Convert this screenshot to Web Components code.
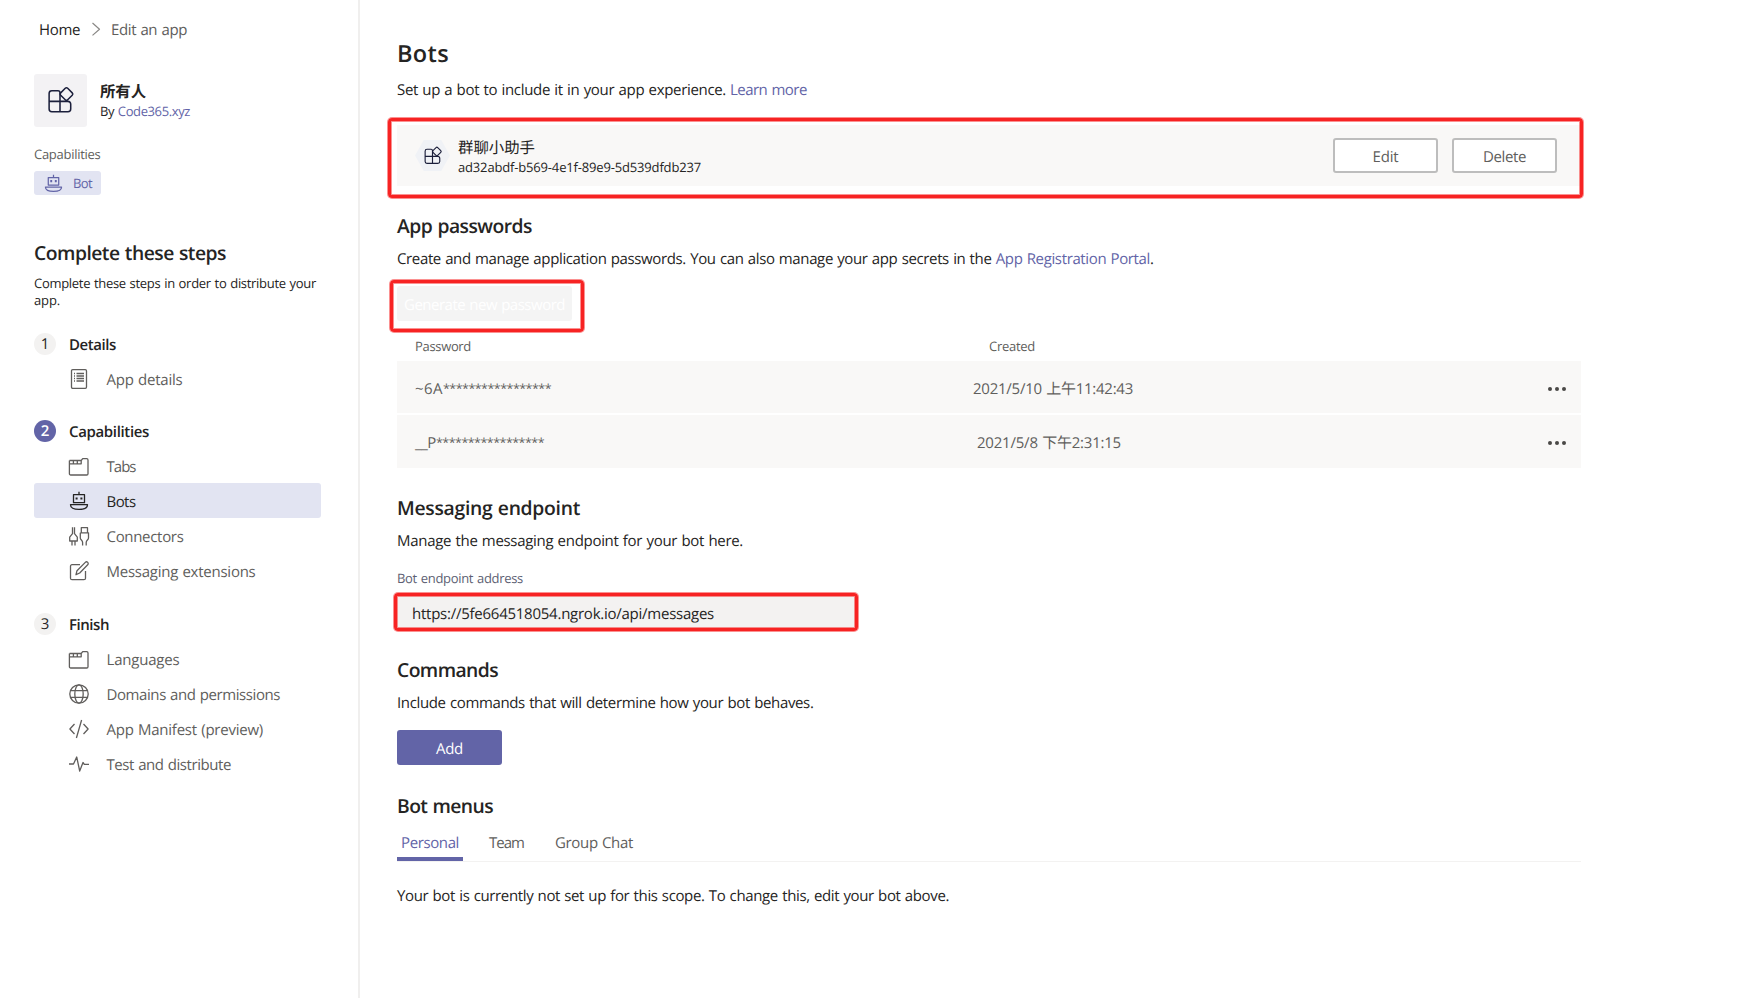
<!DOCTYPE html>
<html lang="en">
<head>
<meta charset="utf-8">
<title>Edit an app</title>
<style>
html,body{margin:0;height:100%;background:#fff}
body{font-family:"Open Sans","Noto Sans CJK SC",sans-serif;color:#252423;text-rendering:geometricPrecision;overflow:hidden}
</style>
</head>
<body>
<bot-app></bot-app>
<script>
const make=(name,render)=>customElements.define(name,class extends HTMLElement{
  connectedCallback(){
    if(this.shadowRoot)return;
    const t=document.createElement('template');
    t.innerHTML=render(this);
    this.attachShadow({mode:'open'}).appendChild(document.importNode(t.content,true));
  }
});
const at=(e,n,d='')=>e.getAttribute(n)??d;

const icons={
  chevron:'<path d="M6.500 4l7 6.200-7 6.200"/>',
  apps:'<path d="M5.200 4.600h3.600a1.200 1.200 0 0 1 1.200 1.200V16.900H5.200A1.600 1.600 0 0 1 3.600 15.300V6.200A1.600 1.600 0 0 1 5.200 4.600zM3.600 10.800h11.100a1.600 1.600 0 0 1 1.600 1.600v2.900a1.600 1.600 0 0 1-1.600 1.600H10M10 10.800V9"/><rect x="10.900" y="3.600" width="5.800" height="5.800" rx="1" transform="rotate(45 13.800 6.500)"/>',
  bot:'<path d="M10 .8v2.400M4.500 3.700h11v8H4.500zM1.500 13.700h17c0 3.200-3 4.700-8.500 4.700s-8.500-1.500-8.500-4.700z"/><path d="M7.600 6.400v2.200M12.400 6.400v2.200" stroke-width="2"/>',
  details:'<rect x="2.500" y=".7" width="15" height="18.600" rx="1.200"/><path d="M7.500 4.500h7.500M7.500 7h7.500M7.500 9.500h7.500M7.500 12h7.500M5 4.500h1M5 7h1M5 9.500h1M5 12h1"/>',
  tabs:'<path transform="translate(-.3 1)" d="M.8 3.500h11.700L14 1.700h4a1.300 1.300 0 0 1 1.300 1.300v13.700a1.300 1.300 0 0 1-1.300 1.300H2a1.300 1.300 0 0 1-1.300-1.300V3.500M.8 6.800h11.700V3.500M4.700 3.500v3.300M8.600 3.500v3.300"/>',
  plug:'<path transform="translate(0 .5)" d="M3.500.8v6.400L.7 10.700v3.800h7.600v-3.800L5.500 7.200V.8M3 14.500V19M6 14.500V19M11.300 6.300h8.200v5.200c0 2-2.300 2.200-2.300 4.500V19M11.300 6.300v5.200c0 2 2.300 2.200 2.300 4.500V19M12.300 6.300V1.200h6.200v5.100"/>',
  edit:'<path d="M11 3.700H3A1.500 1.500 0 0 0 1.500 5.200v12A1.500 1.500 0 0 0 3 18.700h12a1.500 1.500 0 0 0 1.500-1.500V10M7 13.700l1-4L16.300 1.400a1.600 1.600 0 0 1 2.400 2.400L10.700 12z"/>',
  globe:'<circle cx="10" cy="10" r="9.200"/><ellipse cx="10" cy="10" rx="4.200" ry="9.200"/><path d="M1.600 6.700h16.800M1.600 13.300h16.800"/>',
  code:'<path d="M5.500 5L.9 10l4.600 5M14.500 5l4.600 5-4.600 5M12.600 1L7.400 19"/>',
  pulse:'<path d="M0 10h4.500L7.700 3l3 14 3.300-8.500 1.300 1.800H20"/>'
};
make('ui-icon',e=>`<style>:host{display:inline-flex;flex:none;width:${at(e,'size',20)}px;height:${at(e,'size',20)}px}svg{width:100%;height:100%;fill:none;stroke:currentColor;stroke-width:${at(e,'stroke',1.2)};stroke-linejoin:round;overflow:visible}</style><svg viewBox="0 0 20 20">${icons[at(e,'name')]}</svg>`);

/* Red rounded outline laid over the content it highlights. */
make('mark-box',()=>`<style>:host{position:absolute;z-index:2;box-sizing:border-box;border:3px solid #f72323;border-radius:4px;box-shadow:0 0 0 1px #f7232380,inset 0 0 0 1px #f7232380;pointer-events:none}</style>`);

make('ui-button',e=>`<style>:host{display:flex;box-sizing:border-box;align-items:center;justify-content:center;height:35px;width:${at(e,'width',105)}px;border-radius:3px;font-size:15px;line-height:20px}ui-text{padding-top:2px}
:host([kind=outline]){border:2px solid #bdbdbd;background:#fff;color:#605e5c}
:host([kind=primary]){background:#6264a7;color:#fff}
:host([kind=disabled]){background:#f4f4f4;color:#fff}</style><ui-text w="${at(e,'w')}">${at(e,'label')}</ui-text>`);

make('nav-step',e=>`<style>:host{display:flex;align-items:center;height:22px;font-size:15px;font-weight:600;line-height:22px}
i{font-style:normal;font-weight:400;width:22px;height:22px;border-radius:50%;background:#f3f2f1;text-align:center;margin-right:13px}
:host([on]) i{background:#6264a7;color:#fff;font-weight:600}ui-text{padding-top:1px}</style><i>${at(e,'n')}</i><ui-text w="${at(e,'w')}">${at(e,'label')}</ui-text>`);

make('nav-item',e=>`<style>:host{display:flex;align-items:center;height:35px;box-sizing:border-box;width:287px;padding-left:35px;font-size:15px;line-height:22px;color:#605e5c;border-radius:3px}
:host([on]){background:#e2e4f2;color:#252423}ui-icon{margin-right:17.500px}ui-text{padding-top:2px}</style><ui-icon name="${at(e,'icon')}" stroke="1.300"></ui-icon><ui-text w="${at(e,'w')}">${at(e,'label')}</ui-text>`);

make('app-sidebar',()=>`<style>
:host{display:block;box-sizing:border-box;width:360px;height:998px;border-right:2px solid #f0efee;padding:19px 0 0 34px}
.crumb{display:flex;align-items:center;height:22px;line-height:22px;font-size:15px;padding-left:5px}
.crumb ui-icon{margin:0 5px 3px 6px;color:#8a8886}.crumb .g{color:#605e5c}
.app{display:flex;height:53px;margin-top:33px}
.tile{width:53px;height:53px;border-radius:3px;background:#f3f2f4;display:flex;align-items:center;justify-content:center;color:#1b1f3b;margin-right:13px}
.tile ui-icon{margin:0 2px 1px 0}
.name{font-size:15.400px;font-weight:700;line-height:18px;padding-top:9px}
.by{font-size:13px;line-height:20px}a{color:#6264a7}
.cap{font-size:13px;line-height:18px;color:#605e5c;margin-top:18px}
.badge{display:flex;align-items:center;width:67px;height:24px;border-radius:3px;background:#e2e4f2;color:#6264a7;font-size:13px;line-height:20px;margin-top:8px;box-sizing:border-box;padding-left:10px}
.badge ui-icon{margin-right:10px}.badge ui-text{padding-bottom:1px}
.h{font-size:19.300px;font-weight:600;line-height:28px;margin-top:43.500px}
.d{font-size:13px;line-height:17px;margin:8.500px 0 24px}
</style>
<div class="crumb"><ui-text w="41">Home</ui-text><ui-icon name="chevron" stroke="1.200"></ui-icon><ui-text class="g" w="76">Edit an app</ui-text></div>
<div class="app"><div class="tile"><ui-icon name="apps" size="34" stroke=".9"></ui-icon></div><div><div class="name"><ui-text w="46">所有人</ui-text></div><div class="by"><ui-text w="90">By <a>Code365.xyz</a></ui-text></div></div></div>
<div class="cap"><ui-text w="66.500">Capabilities</ui-text></div>
<div class="badge"><ui-icon name="bot" size="19" stroke="1.300"></ui-icon><ui-text w="19">Bot</ui-text></div>
<div class="h"><ui-text w="192">Complete these steps</ui-text></div>
<div class="d"><ui-text w="282">Complete these steps in order to distribute your</ui-text><br><ui-text w="26">app.</ui-text></div>
<nav-step n="1" label="Details" w="47"></nav-step>
<nav-item style="margin-top:6px" icon="details" label="App details" w="76"></nav-item>
<nav-step style="margin-top:24px" on n="2" label="Capabilities" w="80"></nav-step>
<nav-item style="margin-top:6px" icon="tabs" label="Tabs" w="29"></nav-item>
<nav-item on icon="bot" label="Bots" w="29"></nav-item>
<nav-item icon="plug" label="Connectors" w="77"></nav-item>
<nav-item icon="edit" label="Messaging extensions" w="149"></nav-item>
<nav-step style="margin-top:25px" n="3" label="Finish" w="40"></nav-step>
<nav-item style="margin-top:6px" icon="tabs" label="Languages" w="73"></nav-item>
<nav-item icon="globe" label="Domains and permissions" w="173.500"></nav-item>
<nav-item icon="code" label="App Manifest (preview)" w="156.500"></nav-item>
<nav-item icon="pulse" label="Test and distribute" w="124.500"></nav-item>`);

make('bot-card',()=>`<style>:host{display:flex;position:relative;align-items:center;box-sizing:border-box;width:1184px;height:61px;background:#f9f8f7;padding:0 24px 0 18px}
.hex{width:35px;height:31px;background:#f0f2f6;clip-path:polygon(25% 0,75% 0,100% 50%,75% 100%,25% 100%,0 50%);display:flex;align-items:center;justify-content:center;color:#1b1f3b;margin-right:8px}
.hex ui-icon{margin-bottom:1px}
.t{flex:1;padding-top:2px}.a{font-size:15.400px;line-height:20px}.b{font-size:13px;line-height:18px}ui-button+ui-button{margin-left:14px}
mark-box{left:-9px;top:-7px;width:1195px;height:80px}</style>
<div class="hex"><ui-icon name="apps" size="23" stroke="1"></ui-icon></div><div class="t"><div class="a"><ui-text w="77">群聊小助手</ui-text></div><div class="b"><ui-text w="243">ad32abdf-b569-4e1f-89e9-5d539dfdb237</ui-text></div></div>
<ui-button kind="outline" label="Edit" w="26"></ui-button><ui-button kind="outline" label="Delete" w="43"></ui-button><mark-box></mark-box>`);

make('password-row',e=>`<style>:host{display:grid;grid-template-columns:${at(e,'col')}px 1fr auto;align-items:center;box-sizing:border-box;width:1184px;height:52px;background:#f9f8f7;padding:3px 15px 0 18px;font-size:15px;line-height:22px;color:#605e5c}
.s{font-size:12.500px}svg{width:18px;height:4px;fill:#4a4846;display:block}</style><div><ui-text w="${at(e,'w1')}">${at(e,'head')}</ui-text><ui-text class="s" w="108">*****************</ui-text></div><ui-text w="${at(e,'w2')}">${at(e,'date')}</ui-text><svg viewBox="0 0 18 4"><circle cx="2" cy="2" r="2"/><circle cx="9" cy="2" r="2"/><circle cx="16" cy="2" r="2"/></svg>`);

make('scope-tabs',()=>`<style>:host{display:flex;width:1184px;height:30px;border-bottom:1px solid #f3f2f1;font-size:15px;line-height:22px;color:#605e5c;gap:22px}
div{padding:1px 4px 0;height:25px}div:last-child{margin-left:1px}.on{color:#6264a7;border-bottom:4px solid #6264a7}</style><div class="on"><ui-text w="58">Personal</ui-text></div><div><ui-text w="35">Team</ui-text></div><div><ui-text w="78">Group Chat</ui-text></div>`);

make('bot-main',()=>`<style>
:host{display:block;padding:37.500px 0 0 37px;flex:1;font-size:15px;line-height:22px}
a{color:#6264a7}h1,h2{margin:0;font-weight:600}h1{font-size:23.500px;line-height:30px}
h2{font-size:19.300px;line-height:28px}p{margin:0;height:22px}
.gen{position:relative;width:175px;margin-top:16px}.gen mark-box{left:-7px;top:-6px;width:194px;height:52px}
.th{display:grid;grid-template-columns:574px 1fr;padding-left:18px;font-size:13px;line-height:18px;color:#605e5c;margin:16px 0 6px}
.lab{font-size:13px;line-height:18px;color:#5d5f73}
.inp{position:relative;box-sizing:border-box;width:458px;height:37px;background:#f3f2f1;padding:10px 0 0 15px;margin-top:6px}
.inp mark-box{left:-3px;top:0;width:464px;height:38px}
</style>
<h1><ui-text w="52">Bots</ui-text></h1>
<p style="margin-top:11.500px"><ui-text w="329">Set up a bot to include it in your app experience.</ui-text> <ui-text w="77"><a>Learn more</a></ui-text></p>
<bot-card style="margin-top:24px"></bot-card>
<h2 style="margin-top:25.500px"><ui-text w="135">App passwords</ui-text></h2>
<p style="margin-top:8.500px"><ui-text w="756.500">Create and manage application passwords. You can also manage your app secrets in the <a>App Registration Portal</a>.</ui-text></p>
<div class="gen"><ui-button kind="disabled" width="175" label="Generate new password" w="161"></ui-button><mark-box></mark-box></div>
<div class="th"><ui-text w="56">Password</ui-text><ui-text w="46">Created</ui-text></div>
<password-row col="558" head="~6A" w1="28" date="2021/5/10 上午11:42:43" w2="160"></password-row>
<password-row style="margin-top:2px;height:53px" col="562" head="__P" w1="21" date="2021/5/8 下午2:31:15" w2="144"></password-row>
<h2 style="margin-top:25.500px"><ui-text w="183">Messaging endpoint</ui-text></h2>
<p style="margin-top:8.500px"><ui-text w="346">Manage the messaging endpoint for your bot here.</ui-text></p>
<div class="lab" style="margin-top:17px"><ui-text w="126">Bot endpoint address</ui-text></div>
<div class="inp"><ui-text w="302">https://5fe664518054.ngrok.io/api/messages</ui-text><mark-box></mark-box></div>
<h2 style="margin-top:26px"><ui-text w="101">Commands</ui-text></h2>
<p style="margin-top:8px"><ui-text w="416.500">Include commands that will determine how your bot behaves.</ui-text></p>
<ui-button style="margin-top:16px" kind="primary" label="Add" w="27"></ui-button>
<h2 style="margin-top:27px"><ui-text w="96">Bot menus</ui-text></h2>
<scope-tabs style="margin-top:11px"></scope-tabs>
<p style="margin-top:22.500px"><ui-text w="552">Your bot is currently not set up for this scope. To change this, edit your bot above.</ui-text></p>`);

make('bot-app',()=>`<style>:host{display:flex;width:1753px;height:998px;background:#fff;overflow:hidden}</style><app-sidebar></app-sidebar><bot-main></bot-main>`);

/* One line of text whose tracking is adjusted so that it takes up w pixels. */
customElements.define('ui-text',class extends HTMLElement{
  connectedCallback(){
    if(this.shadowRoot)return;
    this.attachShadow({mode:'open'}).innerHTML='<style>:host{display:inline-block;white-space:nowrap;vertical-align:top}span{display:inline-block;vertical-align:top;word-spacing:.7px}</style><span><slot></slot></span>';
    const w=+this.getAttribute('w'),s=this.shadowRoot.querySelector('span'),n=this.textContent.length;
    if(w&&n>1){
      const ls=(w-s.getBoundingClientRect().width)/n;
      s.style.letterSpacing=ls.toFixed(3)+'px';
    }
  }
});
</script>
</body>
</html>
